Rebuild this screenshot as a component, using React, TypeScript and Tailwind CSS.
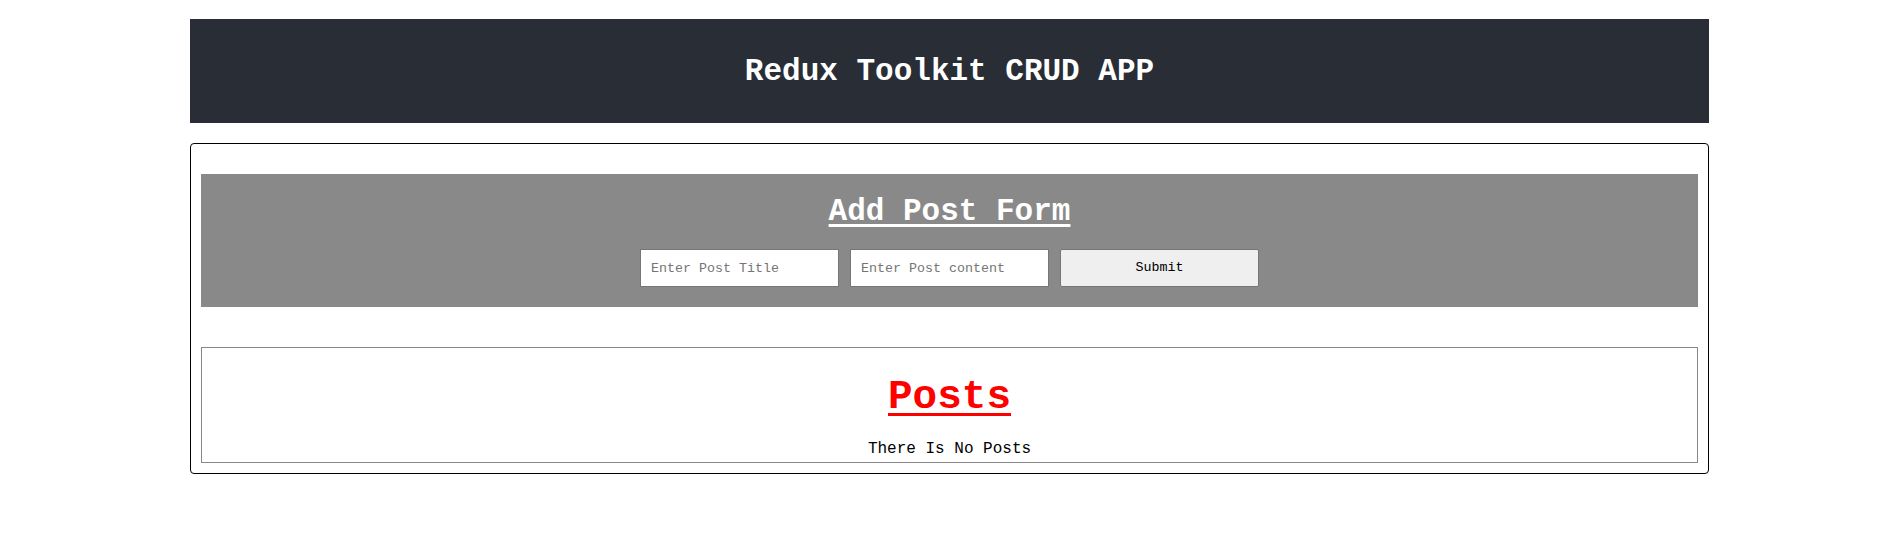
import { useState } from "react";

export default function App() {
  const [title, setTitle] = useState("");
  const [content, setContent] = useState("");

  return (
    <div className="min-h-screen bg-white font-['Liberation_Mono',monospace] pt-[19px]">
      <div className="w-[80%] mx-auto">
        {/* top bar */}
        <header className="h-[104px] bg-[#292d36] flex items-center justify-center">
          <h1 className="text-white font-bold text-[31px] leading-[35px]">
            Redux Toolkit CRUD APP
          </h1>
        </header>

        <main className="mt-[20px] border border-black rounded-[4px] pt-[30px] px-[10px] pb-[10px]">
          {/* add post form */}
          <form
            className="bg-[#898989] pt-[20px] pb-[20px] flex flex-col items-center"
            onSubmit={(e) => e.preventDefault()}
          >
            <h2 className="text-white font-bold text-[31px] leading-[35px] underline decoration-[2.5px] underline-offset-[4px]">
              Add Post Form
            </h2>
            <div className="mt-[20px] flex gap-[11px]">
              <input
                type="text"
                value={title}
                onChange={(e) => setTitle(e.target.value)}
                placeholder="Enter Post Title"
                className="w-[199px] h-[38px] bg-white border border-[#767676] px-[10px] text-[13.33px] outline-none placeholder:text-[#757575]"
              />
              <input
                type="text"
                value={content}
                onChange={(e) => setContent(e.target.value)}
                placeholder="Enter Post content"
                className="w-[199px] h-[38px] bg-white border border-[#767676] px-[10px] text-[13.33px] outline-none placeholder:text-[#757575]"
              />
              <button
                type="submit"
                className="w-[199px] h-[38px] bg-[#efefef] border border-[#767676] rounded-[2px] text-[13.33px] text-black"
              >
                Submit
              </button>
            </div>
          </form>

          {/* post list */}
          <section className="mt-[40px] border border-[#888888] pt-[26px] pb-[4px] flex flex-col items-center">
            <h1 className="text-[#ff0000] font-bold text-[41px] leading-[46px] underline decoration-[3px] underline-offset-[5px]">
              Posts
            </h1>
            <p className="mt-[20px] text-black text-[16px] leading-[18px]">
              There Is No Posts
            </p>
          </section>
        </main>
      </div>
    </div>
  );
}
